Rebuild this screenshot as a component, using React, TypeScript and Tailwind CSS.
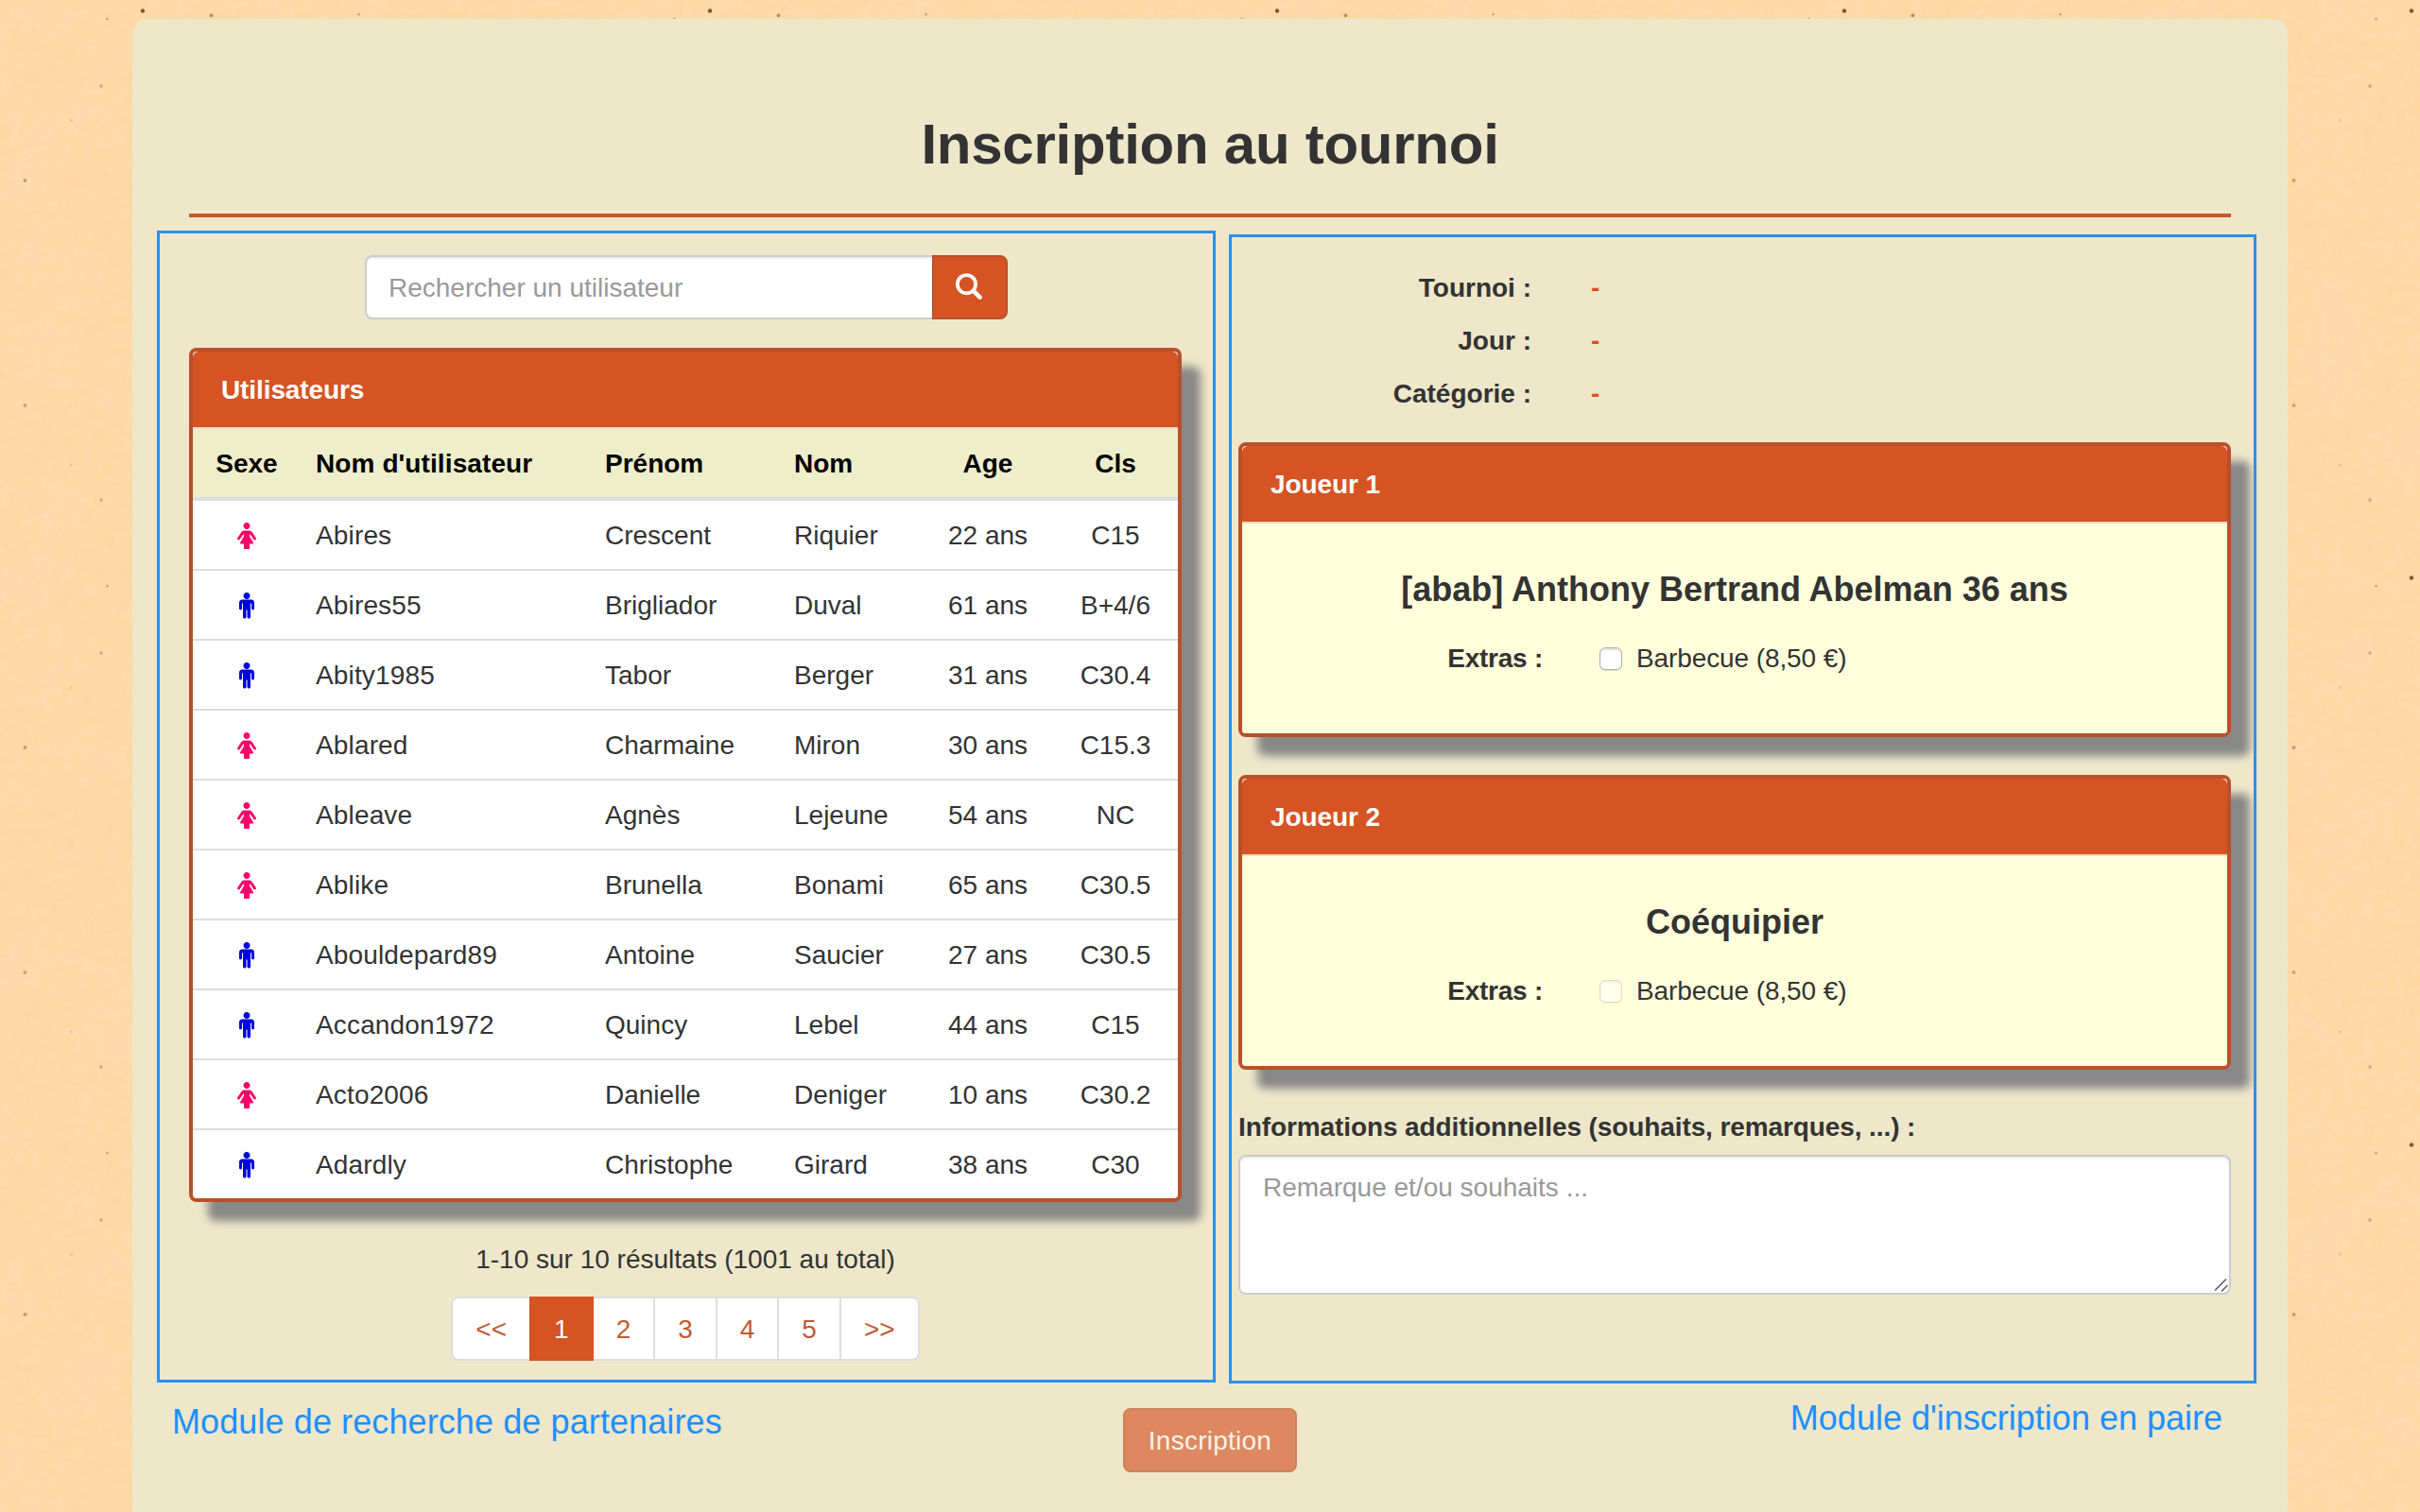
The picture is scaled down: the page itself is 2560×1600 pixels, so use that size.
import React from "react";

type Sex = "f" | "m";

const users: { sex: Sex; username: string; first: string; last: string; age: number; rank: string }[] = [
  { sex: "f", username: "Abires", first: "Crescent", last: "Riquier", age: 22, rank: "C15" },
  { sex: "m", username: "Abires55", first: "Brigliador", last: "Duval", age: 61, rank: "B+4/6" },
  { sex: "m", username: "Abity1985", first: "Tabor", last: "Berger", age: 31, rank: "C30.4" },
  { sex: "f", username: "Ablared", first: "Charmaine", last: "Miron", age: 30, rank: "C15.3" },
  { sex: "f", username: "Ableave", first: "Agnès", last: "Lejeune", age: 54, rank: "NC" },
  { sex: "f", username: "Ablike", first: "Brunella", last: "Bonami", age: 65, rank: "C30.5" },
  { sex: "m", username: "Abouldepard89", first: "Antoine", last: "Saucier", age: 27, rank: "C30.5" },
  { sex: "m", username: "Accandon1972", first: "Quincy", last: "Lebel", age: 44, rank: "C15" },
  { sex: "f", username: "Acto2006", first: "Danielle", last: "Deniger", age: 10, rank: "C30.2" },
  { sex: "m", username: "Adardly", first: "Christophe", last: "Girard", age: 38, rank: "C30" },
];

const FEMALE =
  "M1280 1056q0 40-28 68t-68 28q-51 0-80-43l-227-341h-45v132l247 411q9 15 9 33 0 26-19 45t-45 19h-192v272q0 46-33 79t-79 33h-160q-46 0-79-33t-33-79v-272h-192q-26 0-45-19t-19-45q0-18 9-33l247-411v-132h-45l-227 341q-29 43-80 43-40 0-68-28t-28-68q0-29 16-53l256-384q73-107 176-107h384q103 0 176 107l256 384q16 24 16 53zm-416-864q0 93-65.5 158.5t-158.5 65.5-158.5-65.5-65.5-158.5 65.5-158.5 158.5-65.5 158.5 65.5 65.5 158.5z";
const MALE =
  "M1024 640v416q0 40-28 68t-68 28-68-28-28-68v-352h-64v912q0 46-33 79t-79 33-79-33-33-79v-464h-64v464q0 46-33 79t-79 33-79-33-33-79v-912h-64v352q0 40-28 68t-68 28-68-28-28-68v-416q0-80 56-136t136-56h640q80 0 136 56t56 136zm-288-448q0 93-65.5 158.5t-158.5 65.5-158.5-65.5-65.5-158.5 65.5-158.5 158.5-65.5 158.5 65.5 65.5 158.5z";

function SexIcon({ sex }: { sex: Sex }) {
  return sex === "f" ? (
    <svg className="mx-auto block h-[27.5px] w-5 fill-[#f60468]" viewBox="0 -32 1280 1760">
      <path d={FEMALE} />
    </svg>
  ) : (
    <svg className="mx-auto block h-[27.5px] w-4 fill-[#0000e0]" viewBox="0 -32 1024 1760">
      <path d={MALE} />
    </svg>
  );
}

/* Paper grain with specks that repeat every 600 pixels. */
function PaperTexture() {
  return (
    <svg className="absolute inset-0 h-full w-full" aria-hidden="true">
      <defs>
        <filter id="blotch" x="0" y="0" width="100%" height="100%">
          <feTurbulence type="fractalNoise" baseFrequency="0.012" numOctaves="5" seed="7" />
          <feColorMatrix values="0 0 0 0 0.96  0 0 0 0 0.72  0 0 0 0 0.52  1.6 0 0 0 -0.6" />
        </filter>
        <filter id="grain" x="0" y="0" width="100%" height="100%">
          <feTurbulence type="fractalNoise" baseFrequency="0.09" numOctaves="2" seed="3" />
          <feColorMatrix values="0 0 0 0 1  0 0 0 0 0.9  0 0 0 0 0.72  0 1.5 0 0 -0.55" />
        </filter>
        <pattern id="specks" width="600" height="600" patternUnits="userSpaceOnUse">
          <ellipse cx="151" cy="11.5" rx="2.2" ry="2.2" fill="#80592b" />
          <circle cx="223.5" cy="16.3" r="1.9" fill="#b58a5c" />
          <circle cx="113.5" cy="20" r="1.6" fill="#d3a87a" />
          <circle cx="379.5" cy="15" r="1.6" fill="#d3a87a" />
          <circle cx="26.5" cy="191" r="2" fill="#c99b70" />
          <circle cx="26.5" cy="429" r="2" fill="#cfa176" />
          <circle cx="107" cy="91" r="1.9" fill="#d8aa82" />
          <circle cx="107" cy="529" r="1.9" fill="#daac86" />
          <circle cx="75.5" cy="127.5" r="1.4" fill="#eabd92" />
          <circle cx="75.5" cy="492" r="1.4" fill="#eabd92" />
        </pattern>
      </defs>
      <rect width="100%" height="100%" filter="url(#blotch)" opacity="0.4" />
      <rect width="100%" height="100%" filter="url(#grain)" opacity="0.22" />
      <rect width="100%" height="100%" fill="url(#specks)" />
    </svg>
  );
}

function Panel({ title, className, children }: { title: string; className: string; children: React.ReactNode }) {
  return (
    <div className={`w-[1050px] rounded-lg border-4 border-[#b9502a] bg-white shadow-[20px_20px_10px_#888] ${className}`}>
      <div className="h-[82px] rounded-t-[6px] border-b-2 border-[#f3d9c4] bg-[#d65323] bg-clip-padding px-[30px] pt-[21px] font-bold tracking-[-0.1px] text-white">
        {title}
      </div>
      {children}
    </div>
  );
}

function PlayerPanel({ title, name, disabled, className }: { title: string; name: string; disabled?: boolean; className: string }) {
  return (
    <Panel title={title} className={className}>
      <div className="h-[222px] rounded-b bg-[#ffffdb] pt-[50px]">
        <h3 className="text-center text-[36px] leading-10 font-bold">{name}</h3>
        <div className="mt-8 flex items-center">
          <span className="w-[318px] pt-px text-right font-bold tracking-[-0.25px]">Extras :</span>
          <label className="ml-[60px] flex items-center gap-[15px]">
            <input
              type="checkbox"
              disabled={disabled}
              className="size-6 appearance-none rounded-md border border-[#b0b0b0] bg-white shadow-[inset_0_2px_2px_rgba(0,0,0,0.12),0_1px_0_rgba(0,0,0,0.12)] disabled:opacity-45"
            />
            <span className="pt-px tracking-[-0.1px]">Barbecue (8,50 €)</span>
          </label>
        </div>
      </div>
    </Panel>
  );
}

const pages = ["<<", "1", "2", "3", "4", "5", ">>"];

export default function App() {
  return (
    <div className="relative flex h-[1600px] w-[2560px] justify-center overflow-hidden bg-[#ffd7a3] pt-5 font-['Liberation_Sans',Arial,sans-serif] text-[28px] leading-10 text-[#333]">
      <PaperTexture />
      <main className="relative flex h-[1700px] w-[2280px] flex-col rounded-2xl bg-[#eee7ca]">
        <h1 className="mx-[60px] h-[210px] border-b-4 border-[#c6582c] pt-[97px] text-center text-[60px] leading-[72px] font-bold tracking-[-0.25px]">
          Inscription au tournoi
        </h1>

        <div className="mt-[14px] ml-[26px] flex items-start gap-[14px]">
          <section className="h-[1219px] w-[1120px] border-3 border-[#2a91ef] pt-[23px] pl-[31px]">
            <div className="ml-[186px] flex h-[68px] w-[680px]">
              <input
                placeholder="Rechercher un utilisateur"
                className="w-[600px] rounded-l-lg border-2 border-r-0 border-[#ccc] bg-white px-[23px] pt-[2px] shadow-[inset_0_2px_2px_rgba(0,0,0,0.075)] placeholder:text-[#999]"
              />
              <button className="flex w-20 items-center justify-center rounded-r-lg border-2 border-[#b9502a] bg-[#d65323] pr-[2px] pb-[3px]">
                <svg className="size-7" viewBox="0 0 28 28" fill="none" stroke="#fff" strokeLinecap="round">
                  <circle cx="11.5" cy="11.7" r="9.6" strokeWidth="3.8" />
                  <path d="M18.8 18.8 25.6 25.6" strokeWidth="4.6" />
                </svg>
              </button>
            </div>

            <Panel title="Utilisateurs" className="mt-[30px]">
              <table className="w-full table-fixed border-separate border-spacing-0">
                <colgroup>
                  <col className="w-[114px]" />
                  <col className="w-[306px]" />
                  <col className="w-[200px]" />
                  <col className="w-[152px]" />
                  <col className="w-[138px]" />
                  <col className="w-[132px]" />
                </colgroup>
                <thead>
                  <tr className="bg-[#eeeecb] text-left text-black [&>th]:h-[76px] [&>th]:border-b-4 [&>th]:border-[#ddd] [&>th]:px-4 [&>th]:pt-[2px] [&>th]:pb-0">
                    <th className="text-center">Sexe</th>
                    <th className="tracking-[0.1px]">Nom d'utilisateur</th>
                    <th>Prénom</th>
                    <th>Nom</th>
                    <th className="text-center">Age</th>
                    <th className="text-center">Cls</th>
                  </tr>
                </thead>
                <tbody>
                  {users.map((u) => (
                    <tr
                      key={u.username}
                      className="whitespace-nowrap [&>td]:h-[74px] [&>td]:border-b-2 [&>td]:border-[#ddd] [&>td]:px-4 [&>td]:pt-[2px] [&>td]:pb-0 last:[&>td]:h-[72px] last:[&>td]:border-b-0"
                    >
                      <td>
                        <SexIcon sex={u.sex} />
                      </td>
                      <td className="tracking-[0.15px]">{u.username}</td>
                      <td>{u.first}</td>
                      <td>{u.last}</td>
                      <td className="text-center">{u.age} ans</td>
                      <td className="text-center">{u.rank}</td>
                    </tr>
                  ))}
                </tbody>
              </table>
            </Panel>

            <p className="mt-[41px] w-[1050px] text-center">1-10 sur 10 résultats (1001 au total)</p>
            <nav className="mt-[19px] flex w-[1050px] justify-center">
              {pages.map((p) => (
                <a
                  key={p}
                  className={
                    p === "1"
                      ? "relative -ml-0.5 h-[68px] border-2 border-[#d65323] bg-[#d65323] px-6 pt-[13px] text-white"
                      : "-ml-0.5 h-[68px] border-2 border-[#ddd] bg-white px-6 pt-[13px] text-[#bf5a33] first:ml-0 first:rounded-l-lg last:rounded-r-lg"
                  }
                >
                  {p}
                </a>
              ))}
            </nav>
          </section>

          <section className="mt-[4px] h-[1216px] w-[1087px] border-3 border-[#2a91ef] pt-[34px] pl-[7px]">
            <dl className="flex flex-col gap-4 font-bold">
              {["Tournoi :", "Jour :", "Catégorie :"].map((label) => (
                <div key={label} className="flex">
                  <dt className="w-[310px] text-right">{label}</dt>
                  <dd className="ml-[63px] text-[#d65323]">-</dd>
                </div>
              ))}
            </dl>
            <PlayerPanel title="Joueur 1" name="[abab] Anthony Bertrand Abelman 36 ans" className="mt-[31px]" />
            <PlayerPanel title="Joueur 2" name="Coéquipier" disabled className="mt-10" />
            <label className="mt-[41px] block font-bold tracking-[-0.1px]">
              Informations additionnelles (souhaits, remarques, ...) :
            </label>
            <div className="relative mt-[9px] h-[148px] w-[1050px]">
              <textarea
                placeholder="Remarque et/ou souhaits ..."
                className="block h-full w-full resize-none rounded-lg border-2 border-[#ccc] bg-white px-6 pt-[13px] pb-3 shadow-[inset_0_2px_2px_rgba(0,0,0,0.075)] placeholder:text-[#999]"
              />
              <svg className="absolute right-[3px] bottom-[3px] size-[15px]" viewBox="0 0 15 15" stroke="#555" strokeWidth="1.5" fill="none">
                <path d="M1 13.5 13 1.5M8 14.5 14.5 8" />
              </svg>
            </div>
          </section>
        </div>

        <div className="flex items-start justify-between pr-[69px] pl-[42px]">
          <span className="mt-[21px] w-[620px] text-[36px] tracking-[0.1px] text-[#1e90ff]">Module de recherche de partenaires</span>
          <button
            disabled
            className="mt-[26px] ml-[27px] h-[68px] w-[184px] rounded-lg border-2 border-[#d0825c] bg-[#dd8860] pt-[2px] tracking-[0.25px] text-[#fbf3e8]"
          >
            Inscription
          </button>
          <span className="mt-[17px] w-[620px] text-right text-[36px] text-[#1e90ff]">Module d'inscription en paire</span>
        </div>
      </main>
    </div>
  );
}
